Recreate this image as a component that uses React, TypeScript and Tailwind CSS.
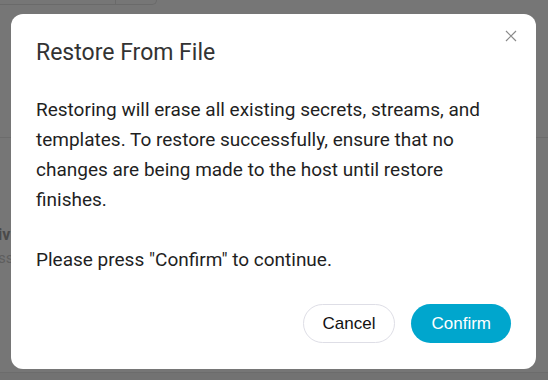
export default function App() {
  return (
    <div className="relative h-[380px] w-[548px] overflow-hidden bg-[#767676] font-['Roboto',sans-serif]">
      {/* page behind the overlay */}
      <div className="flex h-full flex-col">
        <div className="flex h-[5px] w-[157px] rounded-br-[5px] border-b border-r border-[#6a6a6a]">
          <div className="w-[116px] border-r border-[#6a6a6a]" />
        </div>
        <div className="h-[132px]" />
        <div className="border-t border-[#6c6c6c] pt-[84px]">
          <p className="-ml-[2px] text-[16px] font-bold leading-[26px] text-[#4a4a4a]">iv</p>
          <p className="-ml-[2px] text-[15px] leading-[20px] text-[#5e5e5e]">ss</p>
        </div>
        <div className="mt-auto h-[8px] border-t border-[#6c6c6c] bg-[#727272]" />
      </div>

      {/* dialog */}
      <div className="absolute left-[11px] top-[14px] flex h-[355px] w-[525px] flex-col rounded-[12px] bg-white px-[25px] pb-[26px] pt-[25px]">
        <button className="absolute right-[15px] top-[12px] flex h-[20px] w-[20px] items-center justify-center">
          <svg width="12" height="12" viewBox="0 0 12 12" fill="none" stroke="#8a8a8a" strokeWidth="1.2">
            <path d="M1 1L11 11M11 1L1 11" />
          </svg>
        </button>
        <h2 className="text-[23px] leading-[28px] text-[#333333]">Restore From File</h2>
        <div className="mt-[28px] text-[19px] leading-[30px] text-[#1f1f1f]">
          <p>
            Restoring will erase all existing secrets, streams, and templates. To restore successfully, ensure that no
            changes are being made to the host until restore finishes.
          </p>
          <p className="mt-[30px]">Please press "Confirm" to continue.</p>
        </div>
        <div className="mt-auto flex justify-end gap-[16px] font-['Liberation_Sans',Arial,sans-serif] text-[17px]">
          <button className="h-[39px] rounded-full border border-[#dedee6] bg-white px-[19px] text-[#111111]">Cancel</button>
          <button className="h-[39px] rounded-full bg-[#00a6cd] px-[20px] text-white">Confirm</button>
        </div>
      </div>
    </div>
  )
}
